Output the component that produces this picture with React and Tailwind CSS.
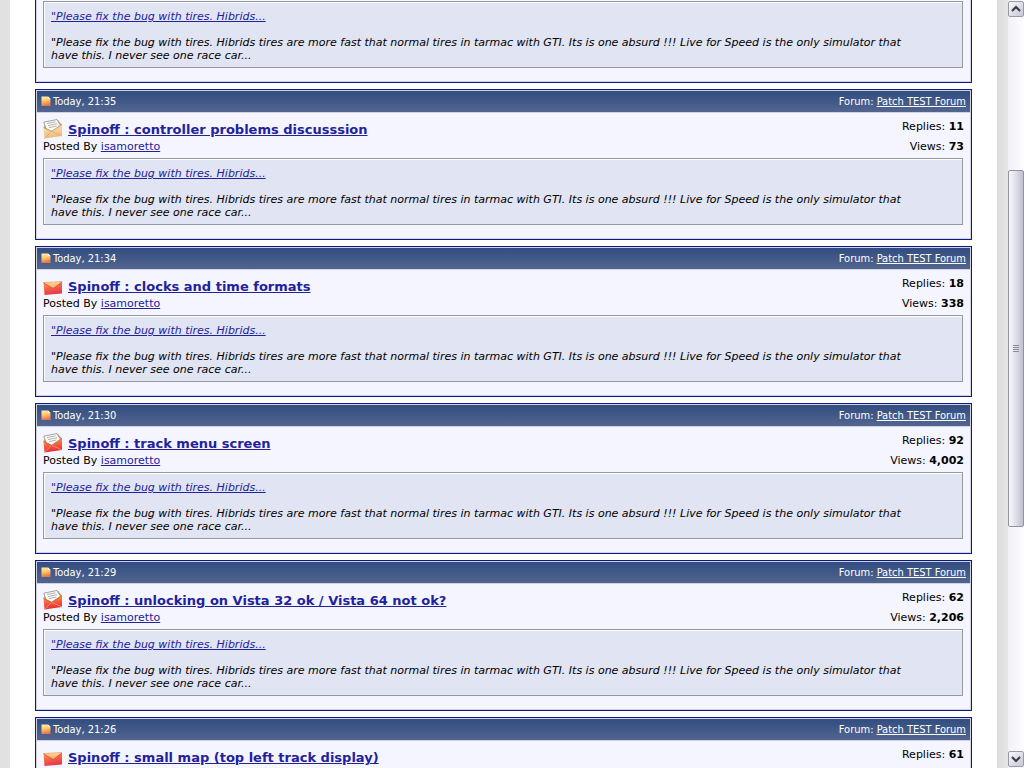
import React from 'react';

const QUOTE_LINK = '"Please fix the bug with tires. Hibrids...';
const QUOTE_TEXT =
  '"Please fix the bug with tires. Hibrids tires are more fast that normal tires in tarmac with GTI. Its is one absurd !!! Live for Speed is the only simulator that have this. I never see one race car...';

const threads = [
  { time: '21:35', title: 'controller problems discusssion', replies: '11', views: '73', icon: 'read' },
  { time: '21:34', title: 'clocks and time formats', replies: '18', views: '338', icon: 'hot' },
  { time: '21:30', title: 'track menu screen', replies: '92', views: '4,002', icon: 'hotRead' },
  { time: '21:29', title: 'unlocking on Vista 32 ok / Vista 64 not ok?', replies: '62', views: '2,206', icon: 'hotRead' },
  { time: '21:26', title: 'small map (top left track display)', replies: '61', icon: 'hot' },
];

const PostIcon = () => (
  <svg width="10" height="11" viewBox="0 0 10 11" aria-hidden="true">
    <defs>
      <linearGradient id="post" x1="0" y1="0" x2="0.2" y2="1">
        <stop offset="0" stopColor="#fff3b0" />
        <stop offset="0.5" stopColor="#fdc66a" />
        <stop offset="1" stopColor="#e8764a" />
      </linearGradient>
    </defs>
    <path d="M0.5 0.5H7L9.5 3V10H0.5Z" fill="url(#post)" />
    <path d="M7 0.5V3H9.5Z" fill="#fff6d8" />
  </svg>
);

// closed envelope, red while the thread is hot
const ClosedEnvelope = () => (
  <svg width="20" height="20" viewBox="0 0 20 20" aria-hidden="true">
    <defs>
      <linearGradient id="closed" x1="0" y1="0" x2="0.3" y2="1">
        <stop offset="0" stopColor="#fbb060" />
        <stop offset="0.5" stopColor="#f4644a" />
        <stop offset="1" stopColor="#e83a48" />
      </linearGradient>
      <linearGradient id="closedFlap" x1="0" y1="0" x2="0" y2="1">
        <stop offset="0" stopColor="#fddc9c" />
        <stop offset="1" stopColor="#fba560" />
      </linearGradient>
    </defs>
    <path d="M0.5 6.5L19 5.5V17.5L1.5 19Z" fill="url(#closed)" />
    <path d="M0.5 6.5L19 5.5L11 12Q10 12.6 9 12Z" fill="url(#closedFlap)" />
    <path d="M0.5 6.8L9 12Q10 12.6 11 12L19 6" fill="none" stroke="#d8503a" strokeWidth="0.8" />
    <path d="M0.5 6.5L19 5.5" stroke="#e8a070" strokeWidth="0.6" />
  </svg>
);

const OpenEnvelope = ({ hot }) => {
  const id = hot ? 'openHot' : 'open';
  return (
    <svg width="20" height="20" viewBox="0 0 20 20" aria-hidden="true">
      <defs>
        <linearGradient id={id} x1="0" y1="0" x2="0.2" y2="1">
          <stop offset="0" stopColor={hot ? '#fbb26a' : '#fbe0ae'} />
          <stop offset="0.5" stopColor={hot ? '#f4643c' : '#f6d09a'} />
          <stop offset="1" stopColor={hot ? '#e52d3c' : '#eebb78'} />
        </linearGradient>
      </defs>
      <path d="M0.5 8L3 4L15 1L19 5.5L12 14H2Z" fill={hot ? '#e09a5c' : '#d8b888'} />
      <path d="M0.8 3.2L14 0.5L17.5 6.5L9 13L3 9.5Z" fill="#fbfbf8" stroke="#8d8d8a" strokeWidth="0.8" />
      <path d="M4 4.6L12.5 2.8M5 6.6L14 4.7M6 8.6L13.5 7" stroke="#a0a0a0" strokeWidth="0.8" />
      <path d="M0.5 8.5L8.5 12.2L19 5.5V17L1.5 19.5Z" fill={`url(#${id})`} />
      <path d="M1.5 19.5L8.5 12.2L19 17" fill="none" stroke={hot ? '#f79a6a' : '#d8ac70'} strokeWidth="0.8" />
      <path d="M0.5 8.5L8.5 12.2L19 5.5" fill="none" stroke={hot ? '#c2593a' : '#b08c5c'} strokeWidth="0.7" />
    </svg>
  );
};

const ThreadIcon = ({ type }) => {
  if (type === 'hot') return <ClosedEnvelope />;
  return <OpenEnvelope hot={type === 'hotRead'} />;
};

const Quote = () => (
  <div className="mr-px border border-[#92999f] bg-[#e1e4f2] pt-2 pr-9 pb-[5px] pl-[7px] italic leading-[13px] shadow-[inset_1px_1px_0_#ffffff]">
    <a href="#post" className="text-[#22229c] underline">{QUOTE_LINK}</a>
    <p className="mt-[13px]">{QUOTE_TEXT}</p>
  </div>
);

const ThreadCard = ({ thread }) => (
  <article className="border border-[#0b198c] bg-[#d1d1e1] p-px">
    <header className="flex h-[21px] items-center justify-between bg-linear-to-b from-[#314d80] to-[#52658f] px-1 font-['DejaVu_Sans_Condensed','DejaVu_Sans',sans-serif] font-stretch-condensed text-white">
      <div className="flex items-center gap-[2px]">
        <PostIcon />
        <span className="pt-[2px]">Today, {thread.time}</span>
      </div>
      <div className="pt-[2px]">
        Forum: <a href="#forum" className="underline">Patch TEST Forum</a>
      </div>
    </header>

    <div className="mt-px bg-[#f5f5ff] px-[6px] pt-[6px] pb-[13px]">
      <div className="flex h-[39px] justify-between">
        <div>
          <div className="flex h-5 items-center gap-[5px]">
            <ThreadIcon type={thread.icon} />
            <a href="#thread" className="pt-[2px] text-[13px] font-bold text-[#22229c] underline">
              Spinoff : {thread.title}
            </a>
          </div>
          {thread.views && (
            <div className="leading-[15px]">
              Posted By <a href="#member" className="text-[#22229c] underline">isamoretto</a>
            </div>
          )}
        </div>
        <div className="-mt-[2px] text-right leading-5">
          <div>Replies: <b>{thread.replies}</b></div>
          {thread.views && <div>Views: <b>{thread.views}</b></div>}
        </div>
      </div>
      {thread.views && <Quote />}
    </div>
  </article>
);

const Chevron = ({ down }) => (
  <svg width="10" height="8" viewBox="0 0 10 8" aria-hidden="true">
    <path d={down ? 'M1 2L5 6L9 2' : 'M1 6L5 2L9 6'} fill="none" stroke="#3c3c44" strokeWidth="2.2" />
  </svg>
);

const ScrollButton = ({ down, label }) => (
  <button
    aria-label={label}
    className="flex h-4 w-full items-center justify-center rounded-xs border border-[#9a9aa6] bg-linear-to-br from-[#fafafc] to-[#c6c6d6]"
  >
    <Chevron down={down} />
  </button>
);

const ScrollBar = () => (
  <div className="flex w-4 shrink-0 flex-col bg-linear-to-r from-[#f1f1f6] to-[#fdfdff] py-px">
    <ScrollButton label="Scroll up" />
    <div className="h-[153px]"></div>
    <div className="flex h-[357px] flex-col items-center justify-center gap-px rounded-xs border border-[#93939f] bg-linear-to-r from-[#f8f8fb] via-[#dedeea] to-[#bfc0d0]">
      <span className="h-px w-[6px] bg-[#8e8e9a]"></span>
      <span className="h-px w-[6px] bg-[#8e8e9a]"></span>
      <span className="h-px w-[6px] bg-[#8e8e9a]"></span>
      <span className="h-px w-[6px] bg-[#8e8e9a]"></span>
    </div>
    <div className="flex-1"></div>
    <ScrollButton down label="Scroll down" />
  </div>
);

const App = () => {
  return (
    <div className="flex h-screen overflow-hidden bg-[#e1e1e1] pl-[10px] font-['DejaVu_Sans',sans-serif] text-[11px] text-black">
      <main className="flex flex-1 flex-col gap-[6px] bg-white px-[25px]">
        {/* tail of the thread scrolled past the top edge */}
        <article className="border border-t-0 border-[#0b198c] bg-[#d1d1e1] px-px pb-px">
          <div className="bg-[#f5f5ff] px-[6px] pt-px pb-[13px]">
            <Quote />
          </div>
        </article>

        {threads.map((thread) => (
          <ThreadCard key={thread.time} thread={thread} />
        ))}
      </main>
      <div className="w-[11px] shrink-0 bg-linear-to-r from-[#dcdcdc] to-[#e6e6e8]"></div>
      <ScrollBar />
    </div>
  );
};

export default App;
